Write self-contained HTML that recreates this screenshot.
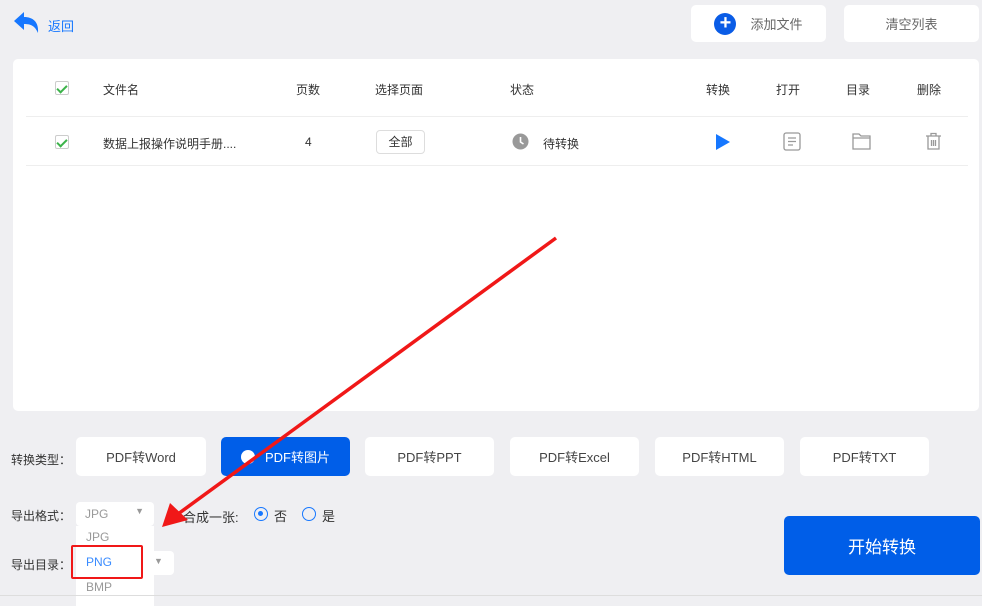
<!DOCTYPE html>
<html><head><meta charset="utf-8"><style>
*{margin:0;padding:0;box-sizing:border-box}
body{width:982px;height:601px;background:#efeff2;position:relative;overflow:hidden;font-family:"Liberation Sans","Noto Sans CJK SC",sans-serif;color:#333}
.a{position:absolute}
.btn{position:absolute;background:#fff;border-radius:5px;font-size:13px;color:#444;display:flex;align-items:center;justify-content:center}
.t{position:absolute;font-size:12px;color:#333}
.cb{position:absolute;width:14px;height:14px;border:1px solid #ccc;border-radius:2px;background:#fff}
.cb:after{content:"";position:absolute;left:3px;top:1px;width:4px;height:8px;border:solid #3cb34a;border-width:0 2px 2px 0;transform:rotate(45deg)}
</style></head><body>
<svg class="a" style="left:13px;top:11px" width="28" height="24" viewBox="0 0 28 24"><path d="M1 10 L11 1 L11 6 C20 6 26 11 25 22 C22 15 18 13 11 13 L11 19 Z" fill="#1677ff"/></svg>
<div class="t" style="left:48px;top:16px;color:#1677ff;font-size:13px">返回</div>
<div class="btn" style="left:691px;top:5px;width:135px;height:37px"><span style="display:inline-block;width:22px;height:22px;border-radius:50%;background:#0a5ce6;color:#fff;font-size:20px;line-height:21px;text-align:center;margin-right:14px;font-weight:bold">+</span><span style="color:#666">添加文件</span></div>
<div class="btn" style="left:844px;top:5px;width:135px;height:37px;color:#666">清空列表</div>
<div class="a" style="left:13px;top:59px;width:966px;height:352px;background:#fff;border-radius:5px"></div>
<div class="cb" style="left:55px;top:81px"></div>
<div class="t" style="left:103px;top:81px">文件名</div>
<div class="t" style="left:296px;top:81px">页数</div>
<div class="t" style="left:375px;top:81px">选择页面</div>
<div class="t" style="left:510px;top:81px">状态</div>
<div class="t" style="left:706px;top:81px">转换</div>
<div class="t" style="left:776px;top:81px">打开</div>
<div class="t" style="left:846px;top:81px">目录</div>
<div class="t" style="left:917px;top:81px">删除</div>
<div class="a" style="left:26px;top:116px;width:942px;height:1px;background:#eee"></div>
<div class="cb" style="left:55px;top:135px"></div>
<div class="t" style="left:103px;top:135px">数据上报操作说明手册....</div>
<div class="t" style="left:305px;top:135px">4</div>
<div class="a" style="left:376px;top:130px;width:49px;height:24px;border:1px solid #ddd;border-radius:4px;font-size:12px;text-align:center;line-height:22px">全部</div>
<svg class="a" style="left:512px;top:133px" width="17" height="17"><circle cx="8.5" cy="8.5" r="8" fill="#999"/><path d="M8.5 4 V9 L11.5 11" stroke="#fff" stroke-width="1.6" fill="none"/></svg>
<div class="t" style="left:543px;top:135px">待转换</div>
<svg class="a" style="left:715px;top:133px" width="16" height="18"><path d="M1 1 L15 9 L1 17Z" fill="#1677ff"/></svg>
<svg class="a" style="left:783px;top:132px" width="18" height="19"><rect x="1" y="1" width="16" height="17" rx="2" fill="none" stroke="#999" stroke-width="1.3"/><path d="M5 6H13M5 9.5H13M5 13H10" stroke="#999" stroke-width="1.3"/></svg>
<svg class="a" style="left:852px;top:133px" width="19" height="17"><path d="M1 1H7L9 3H18V16H1Z" fill="none" stroke="#999" stroke-width="1.3"/><path d="M1 5H18" stroke="#999" stroke-width="1.3"/></svg>
<svg class="a" style="left:925px;top:132px" width="17" height="19"><path d="M1 4H16M6 4V1.5H11V4M3 4V17H14V4M6.5 8V14M8.5 8V14M10.5 8V14" fill="none" stroke="#999" stroke-width="1.3"/></svg>
<div class="a" style="left:26px;top:165px;width:942px;height:1px;background:#eee"></div>
<div class="t" style="left:11px;top:451px">转换类型：</div>
<div class="btn" style="left:76px;top:437px;width:130px;height:39px">PDF转Word</div>
<div class="btn" style="left:221px;top:437px;width:129px;height:39px;background:#005ee8;color:#fff"><span style="display:inline-block;width:14px;height:14px;border-radius:50%;background:#fff;margin-right:10px"></span>PDF转图片</div>
<div class="btn" style="left:365px;top:437px;width:129px;height:39px">PDF转PPT</div>
<div class="btn" style="left:510px;top:437px;width:129px;height:39px">PDF转Excel</div>
<div class="btn" style="left:655px;top:437px;width:129px;height:39px">PDF转HTML</div>
<div class="btn" style="left:800px;top:437px;width:129px;height:39px">PDF转TXT</div>
<div class="t" style="left:11px;top:507px">导出格式：</div>
<div class="a" style="left:76px;top:502px;width:78px;height:24px;background:#fff;border-radius:4px;font-size:12px;color:#999;padding:5px 9px">JPG<span style="position:absolute;right:10px;top:4px;font-size:9px">▼</span></div>
<div class="t" style="left:183px;top:507px;font-size:13px">合成一张:</div>
<div class="a" style="left:254px;top:507px;width:14px;height:14px;border:1.5px solid #1677ff;border-radius:50%"><div style="margin:3px;width:5px;height:5px;border-radius:50%;background:#1677ff"></div></div>
<div class="t" style="left:274px;top:506px;font-size:13px">否</div>
<div class="a" style="left:302px;top:507px;width:14px;height:14px;border:1.5px solid #1677ff;border-radius:50%"></div>
<div class="t" style="left:322px;top:506px;font-size:13px">是</div>
<div class="t" style="left:11px;top:556px">导出目录：</div>
<div class="a" style="left:140px;top:551px;width:34px;height:24px;background:#fff;border-radius:4px"><span style="position:absolute;left:14px;top:5px;font-size:9px;color:#999">▼</span></div>
<div class="a" style="left:76px;top:526px;width:78px;height:80px;background:#fff;font-size:12px">
<div style="position:absolute;left:10px;top:4px;color:#999">JPG</div>
<div style="position:absolute;left:10px;top:29px;color:#3a8cff">PNG</div>
<div style="position:absolute;left:10px;top:54px;color:#999">BMP</div></div>
<div class="a" style="left:71px;top:545px;width:72px;height:34px;border:2.5px solid #f01818;border-radius:2px"></div>
<div class="a" style="left:784px;top:516px;width:196px;height:59px;background:#005ee8;border-radius:5px;color:#fff;font-size:17px;display:flex;align-items:center;justify-content:center">开始转换</div>
<div class="a" style="left:0;top:595px;width:982px;height:1px;background:#ddd"></div>
<svg class="a" style="left:0;top:0" width="982" height="601"><line x1="556" y1="238" x2="178" y2="514" stroke="#f01818" stroke-width="3.5"/><path d="M162 527 L170 503 L188 520 Z" fill="#f01818"/></svg>
</body></html>
